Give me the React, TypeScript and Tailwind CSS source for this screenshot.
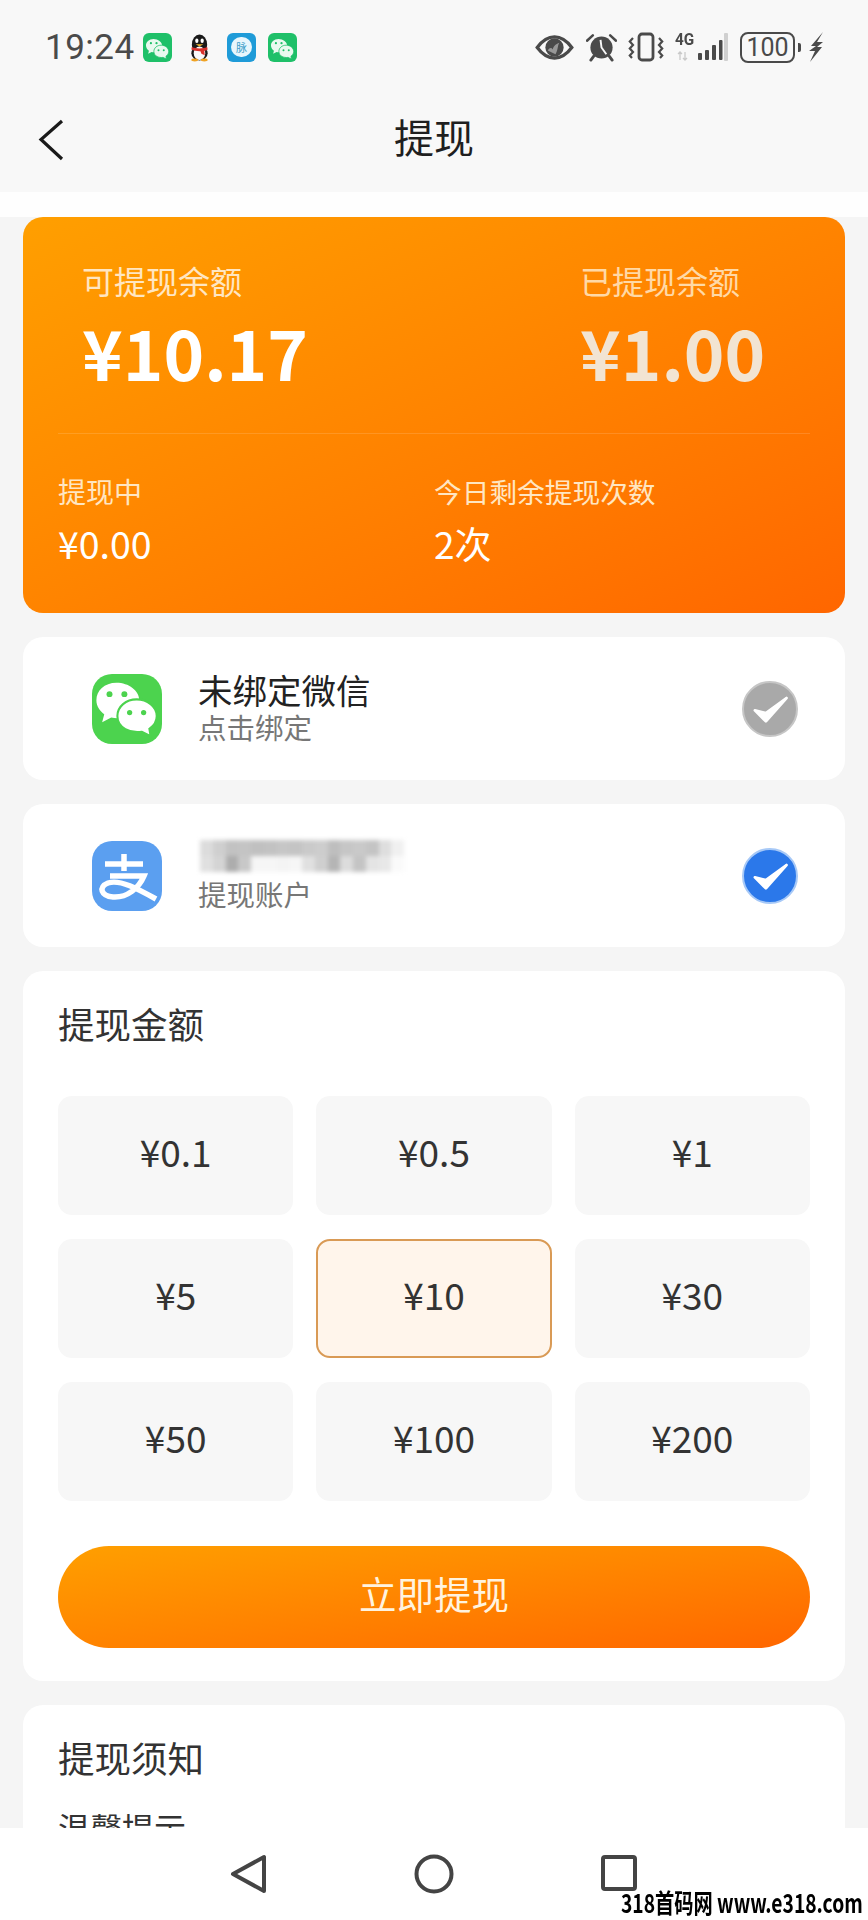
import { ReactNode } from "react";

const FONT = "font-['Noto_Sans_CJK_SC','Noto_Sans',sans-serif]";

const amounts = ["¥0.1", "¥0.5", "¥1", "¥5", "¥10", "¥30", "¥50", "¥100", "¥200"];

// mosaic that hides the alipay account name
const mosaicTop = [
  "bg-[#dcdcdc]", "bg-[#cfcfcf]", "bg-[#c2c2c2]", "bg-[#c4c4c4]", "bg-[#c0c0c0]", "bg-[#c2c2c2]", "bg-[#c6c6c6]", "bg-[#c4c4c4]",
  "bg-[#cacaca]", "bg-[#cdcdcd]", "bg-[#bebebe]", "bg-[#c6c6c6]", "bg-[#c9c9c9]", "bg-[#c4c4c4]", "bg-[#dedede]", "bg-[#f0f0f0]",
];
const mosaicBottom = [
  "bg-[#e0e0e0]", "bg-[#d4d4d4]", "bg-[#adadad]", "bg-[#c8c8c8]", "bg-[#f6f6f6]", "bg-[#f6f6f6]", "bg-[#f4f4f4]", "bg-[#f6f6f6]",
  "bg-[#e0e0e0]", "bg-[#cfcfcf]", "bg-[#b5b5b5]", "bg-[#dcdcdc]", "bg-[#c4c4c4]", "bg-[#e4e4e4]", "bg-[#e8e8e8]", "bg-[#fafafa]",
];

// little two-bubble wechat mark, used in status bar and in the bind row
const WechatBubbles = ({ eye, fill = "#fff" }: { eye: string; fill?: string }) => (
  <>
    <path d="M14 9C7 9 2.500 13.500 2.500 19C2.500 22.500 4.500 25 7 27L5.800 31.500L11 28.800C12.500 29.200 14 29.300 15.500 29.200C21 29 27 25 27 19C27 13.500 21 9 14 9Z" fill={fill} />
    <path d="M33.500 39.500L28.500 37C22 38 14.500 35 14.500 28C14.500 22.500 19.500 18.500 25.500 18.500C31.500 18.500 37 22.500 37 28C37 31 35.500 33.500 32.800 35.300Z" fill={fill} stroke={eye} strokeWidth="1.200" />
    <circle cx="10" cy="15.500" r="1.700" fill={eye} />
    <circle cx="18.500" cy="15.500" r="1.700" fill={eye} />
    <circle cx="21.500" cy="26" r="1.500" fill={eye} />
    <circle cx="29.500" cy="26" r="1.500" fill={eye} />
  </>
);

const StatusWechat = () => (
  <div className="w-[29px] h-[29px] rounded-[6px] bg-[#1fc069] overflow-hidden">
    <svg viewBox="0 0 40 44" className="w-[29px] h-[29px]">
      <WechatBubbles eye="#1fc069" fill="#e9f9ef" />
    </svg>
  </div>
);

const Penguin = () => (
  <svg viewBox="0 0 24 30" className="w-[23px] h-[29px]">
    <ellipse cx="12" cy="12" rx="8" ry="10.500" fill="#1a1a1a" />
    <ellipse cx="12" cy="21" rx="8.500" ry="7.500" fill="#1a1a1a" />
    <ellipse cx="12" cy="21" rx="6" ry="7" fill="#fafafa" />
    <ellipse cx="9.200" cy="8" rx="1.700" ry="2.300" fill="#fff" />
    <ellipse cx="14.800" cy="8" rx="1.700" ry="2.300" fill="#fff" />
    <path d="M8 11.500H16L12 14Z" fill="#f5b82e" />
    <path d="M4 14.500C9 16.500 15 16.500 20 14.500L20.500 17C19 18 18 18.500 17 18.500L17.500 23L14 21.500L13 18.800C10 19 6 18 3.500 17Z" fill="#d8322c" />
    <ellipse cx="7" cy="28" rx="3.500" ry="1.500" fill="#f0a324" />
    <ellipse cx="17" cy="28" rx="3.500" ry="1.500" fill="#f0a324" />
  </svg>
);

const Maimai = () => (
  <div className="relative w-[29px] h-[29px] rounded-[6px] bg-[#1f9bd8] flex items-center justify-center">
    <div className="w-[21px] h-[20px] rounded-full bg-[#e8f6fc] text-[#3d9ec9] text-[11px] leading-[20px] text-center font-['Noto_Sans_CJK_SC',serif]">
      脉
    </div>
  </div>
);

const Eye = () => (
  <svg viewBox="0 0 40 26" className="w-[39px] h-[25px]">
    <path d="M2 13C8 5 14 2 20 2C26 2 32 5 38 13C32 21 26 24 20 24C14 24 8 21 2 13Z" fill="none" stroke="#4a4a4a" strokeWidth="3.400" />
    <circle cx="20" cy="13" r="9.500" fill="#4a4a4a" />
    <path d="M13 16C15 13 17 13 18 15C19 11 22 9 25 8C23 11 24 15 21 20Z" fill="#f8f8f8" opacity="0.45" />
  </svg>
);

const Alarm = () => (
  <svg viewBox="0 0 32 30" className="w-[31px] h-[29px]">
    <circle cx="16" cy="15" r="11.500" fill="#4a4a4a" />
    <path d="M1 8L7 2.500M31 8L25 2.500" stroke="#4a4a4a" strokeWidth="2.600" strokeLinecap="round" />
    <path d="M5 28L8 24M27 28L24 24" stroke="#4a4a4a" strokeWidth="3" strokeLinecap="round" />
    <path d="M15 7L16 15L21 22" fill="none" stroke="#f8f8f8" strokeWidth="2" />
  </svg>
);

const Vibrate = () => (
  <svg viewBox="0 0 36 30" className="w-[36px] h-[30px]">
    <rect x="11" y="2" width="14" height="26" rx="3" fill="none" stroke="#4a4a4a" strokeWidth="2.800" />
    <path d="M5 6L1.800 9.500L5 13L1.800 16.500L5 20L1.800 23.500L4 26" fill="none" stroke="#4a4a4a" strokeWidth="2.200" />
    <path d="M31 6L34.200 9.500L31 13L34.200 16.500L31 20L34.200 23.500L32 26" fill="none" stroke="#4a4a4a" strokeWidth="2.200" />
  </svg>
);

const Signal = () => (
  <div className="relative w-[53px] h-[30px]">
    <span className="absolute left-0 top-[-2px] text-[17px] leading-[18px] font-bold text-[#4a4a4a] font-['Roboto',sans-serif] scale-x-90 origin-left">
      4G
    </span>
    <svg viewBox="0 0 53 30" className="w-[53px] h-[30px]">
      <path d="M5 20V28M3 22L5 20L7 22M10 28V20M8 26L10 28L12 26" fill="none" stroke="#c9c9c9" strokeWidth="1.300" />
      <rect x="23" y="21" width="4" height="7" rx="1" fill="#4a4a4a" />
      <rect x="30" y="18" width="4" height="10" rx="1" fill="#4a4a4a" />
      <rect x="37" y="13" width="4" height="15" rx="1" fill="#4a4a4a" />
      <rect x="44" y="8" width="3.500" height="20" rx="1" fill="#4a4a4a" />
      <rect x="49" y="1" width="4" height="28" rx="1" fill="#d0d0d0" />
    </svg>
  </div>
);

const Battery = () => (
  <div className="flex items-center gap-[3px]">
    <div className="w-[55px] h-[31px] rounded-[8px] border-[2px] border-[#4a4a4a] flex items-center justify-center text-[25px] leading-none text-[#4a4a4a] font-['Roboto',sans-serif]">
      100
    </div>
    <div className="w-[3px] h-[9px] rounded-r-[2px] bg-[#4a4a4a]" />
  </div>
);

const Bolt = () => (
  <svg viewBox="0 0 16 32" className="w-[16px] h-[32px]">
    <path d="M15 1L3 15L8 15L1 20L7 20L2 31L14 16L9 16L15 11L9 11Z" fill="#4a4a4a" />
  </svg>
);

const StatusBar = () => (
  <div className="h-[94px] pl-[45px] pr-[44px] flex items-center justify-between">
    <div className="flex items-center">
      <span className="text-[35px] leading-none text-[#4a4a4a] font-['Roboto',sans-serif] w-[98px] tracking-[0.5px]">19:24</span>
      <StatusWechat />
      <div className="ml-[16px]"><Penguin /></div>
      <div className="ml-[16px]"><Maimai /></div>
      <div className="ml-[12px]"><StatusWechat /></div>
    </div>
    <div className="flex items-center">
      <Eye />
      <div className="ml-[12px]"><Alarm /></div>
      <div className="ml-[11px]"><Vibrate /></div>
      <div className="ml-[11px]"><Signal /></div>
      <div className="ml-[12px]"><Battery /></div>
      <div className="ml-[7px]"><Bolt /></div>
    </div>
  </div>
);

const Check = ({ color, ring }: { color: string; ring: string }) => (
  <div className={`w-[56px] h-[56px] rounded-full border-[2px] flex items-center justify-center ${color} ${ring}`}>
    <svg viewBox="0 0 32 32" className="w-[44px] h-[44px] shrink-0">
      <path d="M5 17L13 25L28 8L13 19Z" fill="#fff" stroke="#fff" strokeWidth="2" strokeLinejoin="round" />
    </svg>
  </div>
);

const AccountRow = ({ icon, title, sub, check }: { icon: ReactNode; title: ReactNode; sub: string; check: ReactNode }) => (
  <div className="h-[143px] bg-white rounded-[20px] pl-[69px] pr-[47px] flex items-center">
    {icon}
    <div className="ml-[36px] flex-1 pb-[3px]">
      <div className="h-[40px] text-[34.500px] leading-[40px] text-[#222]">{title}</div>
      <div className="h-[38px] -mt-[1px] text-[28.500px] leading-[38px] text-[#777]">{sub}</div>
    </div>
    {check}
  </div>
);

const App = () => {
  return (
    <div className={`w-[868px] h-[1920px] flex flex-col overflow-hidden bg-[#f5f5f5] relative ${FONT}`}>
      <div className="h-[192px] bg-[#f8f8f8] shrink-0">
        <StatusBar />
        <div className="relative h-[88px] pb-[4px] flex items-center justify-center">
          <svg viewBox="0 0 30 44" className="absolute left-[36px] top-[24px] w-[30px] h-[44px]">
            <path d="M26 3L5 21.500L26 41" fill="none" stroke="#1a1a1a" strokeWidth="3.200" />
          </svg>
          <span className="text-[40px] leading-none text-[#1f1f1f]">提现</span>
        </div>
      </div>

      <div className="flex-1 min-h-0 overflow-hidden">
        <div className="h-[25px] bg-[#fefefe]" />
        <div className="px-[23px] flex flex-col gap-[24px]">
          {/* balance */}
          <div className="h-[396px] rounded-[20px] bg-gradient-to-br from-[#ff9f00] to-[#ff6600] px-[35px]">
            <div className="h-[217px] border-b border-[#ffffff22] flex">
              <div className="ml-[24px] w-[498px] pt-[44px]">
                <div className="text-[32px] leading-[38px] text-[#ffe6c2]">可提现余额</div>
                <div className="mt-[12px] text-[69px] leading-[80px] font-bold text-white">¥10.17</div>
              </div>
              <div className="pt-[44px]">
                <div className="text-[32px] leading-[38px] text-[#ffd9a6]">已提现余额</div>
                <div className="mt-[12px] text-[69px] leading-[80px] font-bold text-[#f2e4d2]">¥1.00</div>
              </div>
            </div>
            <div className="flex pt-[37px]">
              <div className="w-[376px]">
                <div className="text-[28px] leading-[40px] text-[#ffe6c2]">提现中</div>
                <div className="mt-[12px] text-[37.500px] leading-[40px] text-white">¥0.00</div>
              </div>
              <div>
                <div className="text-[27.700px] leading-[40px] text-[#ffe6c2]">今日剩余提现次数</div>
                <div className="mt-[12px] text-[37px] leading-[40px] text-white">2次</div>
              </div>
            </div>
          </div>

          <AccountRow
            icon={
              <div className="w-[70px] h-[70px] rounded-[20px] bg-[#4cd34e] overflow-hidden">
                <svg viewBox="0 0 40 40" className="w-[70px] h-[70px]">
                  <g transform="translate(0,-4)">
                    <WechatBubbles eye="#4cd34e" />
                  </g>
                </svg>
              </div>
            }
            title="未绑定微信"
            sub="点击绑定"
            check={<Check color="bg-[#a9a9a9]" ring="border-[#c6c6c6]" />}
          />

          <AccountRow
            icon={
              <div className="w-[70px] h-[70px] rounded-[20px] bg-[#5b9ff0] overflow-hidden">
                <svg viewBox="0 0 70 70" className="w-[70px] h-[70px]">
                  <path d="M32 13V30M13 23H51M18 35H52C47 47 35 57 21 56C9 55 6 46 16 42C28 38 46 48 64 58" fill="none" stroke="#fff" strokeWidth="5.500" />
                </svg>
              </div>
            }
            title={
              <div className="relative h-[40px]">
                <div className="absolute left-[2px] top-[4px] w-[204px] flex flex-col blur-[2px]">
                  <div className="flex h-[16px]">
                    {mosaicTop.map((c, i) => (
                      <div key={i} className={`flex-1 ${c}`} />
                    ))}
                  </div>
                  <div className="flex h-[16px]">
                    {mosaicBottom.map((c, i) => (
                      <div key={i} className={`flex-1 ${c}`} />
                    ))}
                  </div>
                </div>
              </div>
            }
            sub="提现账户"
            check={<Check color="bg-[#2b78ea]" ring="border-[#a7c9f7]" />}
          />

          {/* amount */}
          <div className="h-[710px] bg-white rounded-[20px] px-[35px] pt-[31px]">
            <div className="text-[36.500px] leading-[44px] text-[#333]">提现金额</div>
            <div className="mt-[50px] grid grid-cols-3 gap-x-[23px] gap-y-[24px]">
              {amounts.map((a) => (
                <div
                  key={a}
                  className={
                    a === "¥10"
                      ? "h-[119px] pb-[8px] rounded-[14px] border-[2px] border-[#d99a55] bg-[#fff5eb] flex items-center justify-center text-[37px] text-[#333]"
                      : "h-[119px] pb-[8px] rounded-[14px] bg-[#f7f7f7] flex items-center justify-center text-[37px] text-[#333]"
                  }
                >
                  {a}
                </div>
              ))}
            </div>
            <div className="mt-[45px] h-[102px] pb-[8px] rounded-full bg-gradient-to-br from-[#ff9f00] to-[#ff6600] flex items-center justify-center text-[37.500px] text-[#fff3df]">
              立即提现
            </div>
          </div>

          {/* notice, runs under the nav bar */}
          <div className="h-[300px] bg-white rounded-t-[20px] px-[35px] pt-[31px]">
            <div className="text-[36.500px] leading-[44px] text-[#333]">提现须知</div>
            <div className="mt-[27px] text-[32px] leading-[40px] text-[#333]">温馨提示</div>
          </div>
        </div>
      </div>

      {/* android nav */}
      <div className="h-[92px] shrink-0 bg-white flex items-start justify-center gap-[146px] pt-[26px]">
        <svg viewBox="0 0 38 40" className="w-[38px] h-[40px]">
          <path d="M34 3V37L3 20Z" fill="none" stroke="#444" strokeWidth="4" strokeLinejoin="round" />
        </svg>
        <svg viewBox="0 0 40 40" className="w-[40px] h-[40px]">
          <circle cx="20" cy="20" r="17.500" fill="none" stroke="#444" strokeWidth="4" />
        </svg>
        <svg viewBox="0 0 38 38" className="w-[38px] h-[38px]">
          <rect x="3" y="3" width="32" height="32" rx="2" fill="none" stroke="#444" strokeWidth="4" />
        </svg>
      </div>

      {/* watermark */}
      <div className="absolute right-[5px] bottom-[6px] text-[26px] leading-[24px] font-bold text-black whitespace-nowrap scale-x-[0.74] origin-right">
        318首码网 www.e318.com
      </div>
    </div>
  );
};

export default App;
